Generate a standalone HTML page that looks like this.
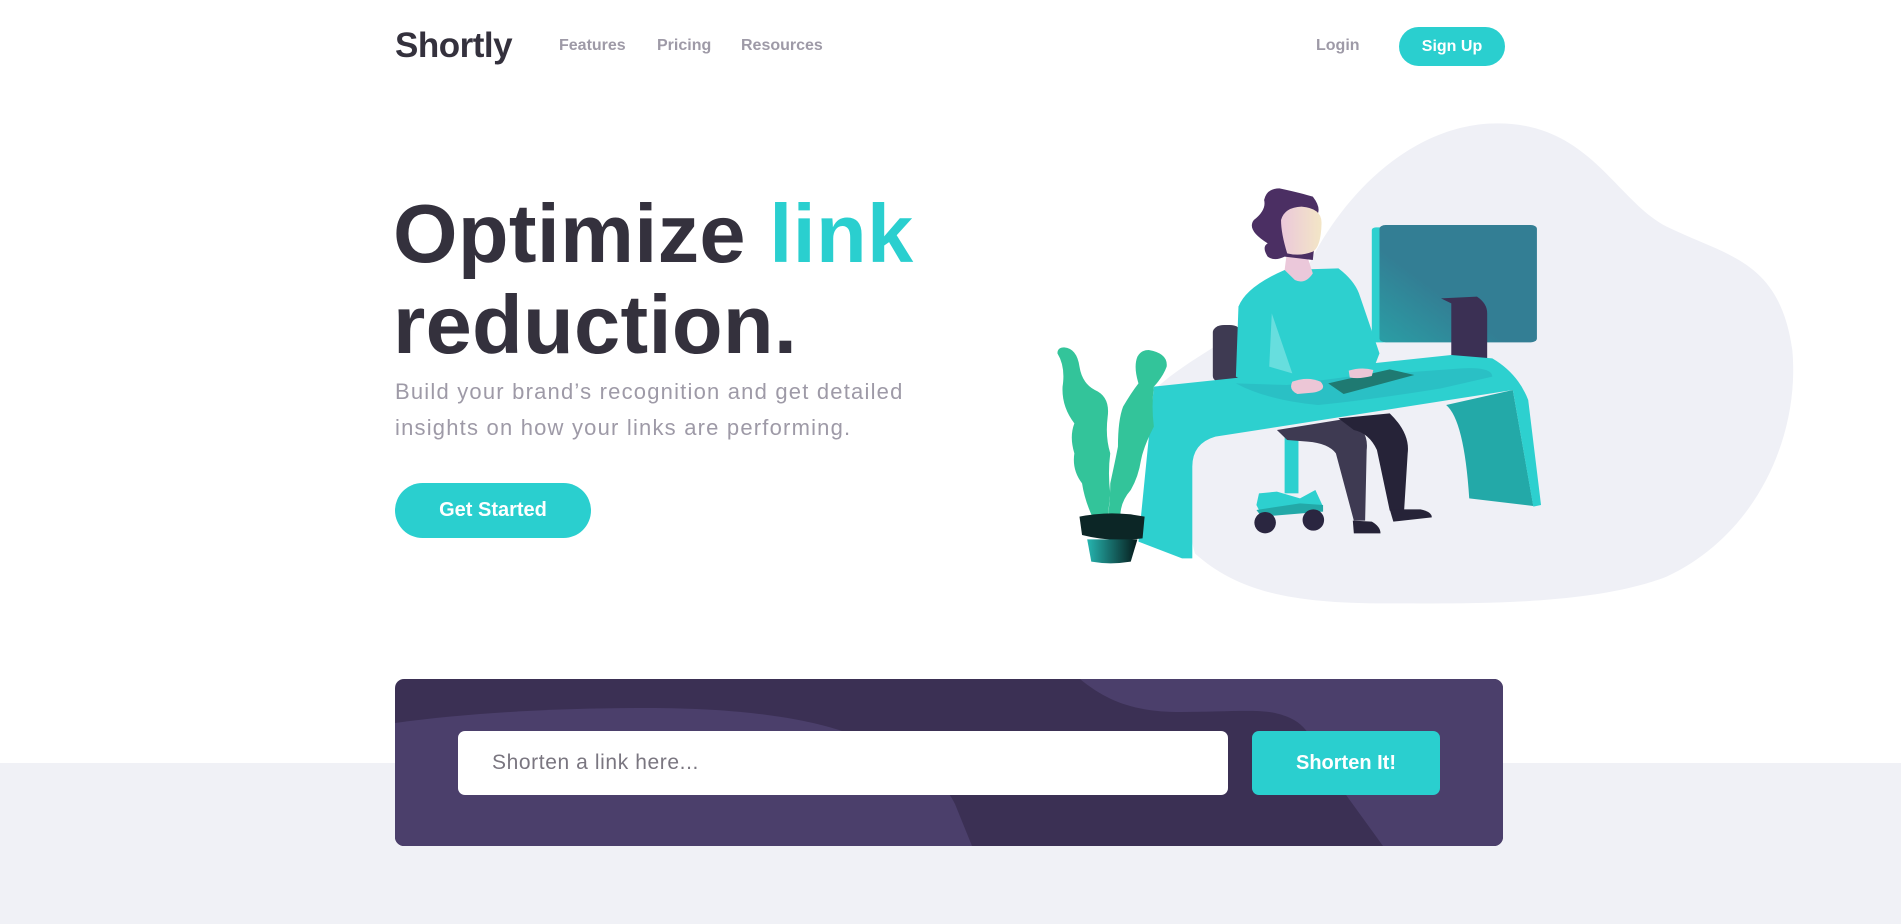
<!DOCTYPE html>
<html><head><meta charset="utf-8"><style>
*{margin:0;padding:0;box-sizing:border-box}
body{width:1901px;height:924px;overflow:hidden;background:#fff;font-family:"Liberation Sans",sans-serif;position:relative}
.a{position:absolute}
.nav{color:#9e9aa7;font-weight:bold;font-size:16px;top:37px}
</style></head><body>
<div class="a" style="left:0;top:763px;width:1901px;height:161px;background:#f0f1f6"></div>
<div class="a" style="left:395px;top:26px;font-size:35px;font-weight:bold;color:#34313d;letter-spacing:-0.5px">Shortly</div>
<div class="a nav" style="left:559px">Features</div>
<div class="a nav" style="left:657px">Pricing</div>
<div class="a nav" style="left:741px">Resources</div>
<div class="a nav" style="left:1316px">Login</div>
<div class="a" style="left:1399px;top:27px;width:106px;height:39px;border-radius:20px;background:#2acfcf;color:#fff;font-weight:bold;font-size:16px;text-align:center;line-height:39px">Sign Up</div>

<div class="a" style="left:393px;top:188px;font-size:83px;font-weight:bold;color:#34313d;line-height:91px;letter-spacing:0.3px">Optimize <span style="color:#2acfcf">link</span><br>reduction.</div>
<div class="a" style="left:395px;top:374px;font-size:22px;color:#9e9aa7;line-height:36px;width:540px;letter-spacing:1.2px">Build your brand’s recognition and get detailed insights on how your links are performing.</div>
<div class="a" style="left:395px;top:483px;width:196px;height:55px;border-radius:28px;background:#2acfcf;color:#fff;font-weight:bold;font-size:20px;text-align:center;line-height:55px">Get Started</div>

<svg class="a" style="left:1000px;top:100px" width="800" height="520" viewBox="0 0 1560 1560" preserveAspectRatio="none">
<defs>
<linearGradient id="f" x1="0" x2="1"><stop offset="0" stop-color="#ebc8da"/><stop offset="1" stop-color="#f3e6c6"/></linearGradient>
<linearGradient id="m" x1="0" y1="1" x2="1" y2="0"><stop offset="0" stop-color="#2a9ea5"/><stop offset=".4" stop-color="#337e94"/></linearGradient>
<linearGradient id="p" x1="0" x2="1"><stop offset="0" stop-color="#26b5b0"/><stop offset="1" stop-color="#061a1a"/></linearGradient>
</defs>
<path d="M970,70 C1150,70 1200,300 1300,380 C1420,470 1520,480 1545,750 C1560,1000 1480,1300 1300,1430 C1150,1520 900,1510 750,1510 C560,1510 460,1470 380,1360 L300,870 C400,730 560,650 600,500 C680,250 820,70 970,70Z" fill="#eff0f6"/>
<rect x="725" y="382" width="30" height="345" rx="8" fill="#2dd0cf"/>
<rect x="740" y="375" width="307" height="352" rx="12" fill="url(#m)"/>
<path d="M860,595 L930,590 Q950,610 950,640 L950,825 L870,832 L858,825 L880,815 L880,610 Z" fill="#3b3054"/>
<rect x="415" y="675" width="55" height="175" rx="22" fill="#3e3a52"/>
<path d="M870,915 L1000,870 L1040,1218 L915,1195 Q905,960 870,915Z" fill="#23a9a8"/>
<path d="M300,860 L880,765 L960,775 Q1010,820 1030,900 L1055,1215 L1040,1220 L1000,870 L420,1010 Q375,1030 375,1100 L375,1375 L355,1375 L270,1325 Z" fill="#2dd0cf"/>
<rect x="555" y="990" width="27" height="190" fill="#2dd0cf"/>
<path d="M505,1180 L540,1175 L585,1195 L615,1170 L630,1220 L585,1215 L510,1245 L500,1215Z" fill="#2dd0cf"/>
<path d="M500,1230 L585,1210 L630,1215 L630,1235 L510,1250Z" fill="#23a9a8"/>
<ellipse cx="517" cy="1268" rx="21" ry="32" fill="#2a2640"/><ellipse cx="611" cy="1260" rx="21" ry="32" fill="#2a2640"/>
<path d="M540,990 L680,955 Q720,990 715,1050 L712,1262 L690,1262 L655,1060 Q640,1030 600,1025 L560,1020Z" fill="#3e3a52"/>
<path d="M660,955 L760,940 Q800,1000 795,1060 L788,1232 L760,1232 L735,1050 Q720,1000 690,990Z" fill="#262338"/>
<path d="M688,1262 L725,1265 Q742,1280 742,1300 L690,1300Z" fill="#262338"/>
<path d="M760,1228 L820,1228 Q842,1235 842,1252 L767,1265Z" fill="#262338"/>
<path d="M555,510 L660,505 Q690,540 700,580 L740,760 L730,800 L680,830 L560,860 Q480,850 460,830 L465,620 Q480,560 555,510Z" fill="#2dd0cf"/>
<path d="M460,850 Q520,900 620,915 Q720,900 860,865 L960,830 Q960,800 900,805 L680,830 L560,855Z" fill="#29b9c0" opacity=".7"/>
<path d="M530,640 L570,820 L525,800Z" fill="#67dede"/>
<path d="M560,450 L595,450 L610,520 Q595,555 575,540 L555,510Z" fill="#ebc8da"/>
<path d="M545,265 Q590,280 610,290 Q625,320 620,340 L610,480 L555,470 Q535,485 522,470 Q510,440 522,430 Q480,390 495,360 Q520,330 515,300 Q520,265 545,265Z" fill="#4b2f63"/>
<path d="M588,320 Q628,325 627,370 Q626,440 610,455 Q585,470 560,460 Q548,400 548,360 Q555,322 588,320Z" fill="url(#f)"/>
<path d="M640,850 L760,808 L808,825 L670,882Z" fill="#1f7a72"/>
<path d="M570,845 Q600,828 625,845 Q640,870 610,878 L580,882 Q562,870 570,845Z" fill="#ecc6d6"/>
<path d="M680,812 Q705,800 728,810 L725,828 Q700,838 682,832Z" fill="#ecc6d6"/>
<path d="M125,742 Q150,745 155,800 Q160,850 185,870 Q215,890 210,950 Q205,1010 215,1060 Q210,1120 215,1180 L210,1255 L180,1250 Q165,1200 160,1150 Q140,1110 145,1060 Q135,1010 145,970 Q120,920 122,860 Q128,800 112,760 Q112,742 125,742Z" fill="#33c49a"/>
<path d="M290,750 Q328,760 325,800 Q318,830 300,860 Q295,920 300,980 Q280,1040 275,1080 Q270,1130 255,1170 Q232,1210 235,1260 L210,1255 Q215,1200 215,1150 Q225,1080 230,1040 Q230,960 240,920 Q255,880 270,850 Q260,800 268,770 Q275,750 290,750Z" fill="#33c49a"/>
<path d="M155,1250 Q218,1230 282,1250 L278,1315 Q218,1328 160,1305Z" fill="#0c2626"/>
<path d="M170,1318 L268,1318 L255,1385 Q215,1395 178,1385Z" fill="url(#p)"/>
</svg>

<div class="a" style="left:395px;top:679px;width:1108px;height:167px;border-radius:9px;background:#3b3054;overflow:hidden">
<svg class="a" style="left:0;top:0" width="1108" height="167" viewBox="0 0 1108 167">
<path d="M0,44 C80,33 170,29 252,29 C350,29 410,40 447,52 C510,75 545,95 560,125 L577,167 L0,167Z" fill="#4b3f6b"/>
<path d="M685,0 C715,25 745,33 786,33 C830,33 860,30 880,34 C905,40 915,50 925,80 L988,167 L1108,167 L1108,0Z" fill="#4b3f6b"/>
</svg>
<div class="a" style="left:63px;top:52px;width:770px;height:64px;background:#fff;border-radius:7px;font-size:21px;color:#7a7680;line-height:64px;padding-left:34px;letter-spacing:.6px">Shorten a link here...</div>
<div class="a" style="left:857px;top:52px;width:188px;height:64px;background:#2acfcf;border-radius:7px;font-size:20px;color:#fff;font-weight:bold;text-align:center;line-height:64px">Shorten It!</div>
</div>
</body></html>
